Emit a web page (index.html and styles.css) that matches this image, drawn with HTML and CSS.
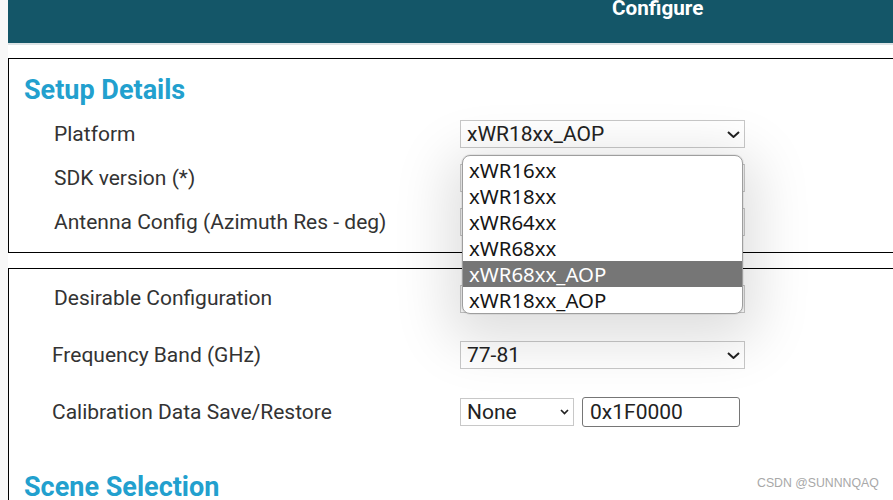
FILE: index.html
```html
<!DOCTYPE html>
<html lang="en">
<head>
<meta charset="utf-8">
<title>Configure</title>
<link rel="stylesheet" href="styles.css">
</head>
<body>
<div class="page">
  <header class="topbar"><span class="topbar-title">Configure</span></header>

  <section class="panel panel--setup">
    <h2 class="panel-title">Setup Details</h2>
    <div class="rows rows--setup">
      <div class="row">
        <span class="label">Platform</span>
        <div class="field">
          <div class="select select--wide">
            <span class="select-text">xWR18xx_AOP</span>
            <svg class="chev chev--big" viewBox="0 0 13 7" aria-hidden="true"><path d="M1 1l5.5 5 5.5-5" fill="none" stroke="#222" stroke-width="2"/></svg>
          </div>
          <ul class="dropdown">
            <li class="dropdown-item">xWR16xx</li>
            <li class="dropdown-item">xWR18xx</li>
            <li class="dropdown-item">xWR64xx</li>
            <li class="dropdown-item">xWR68xx</li>
            <li class="dropdown-item dropdown-item--active">xWR68xx_AOP</li>
            <li class="dropdown-item">xWR18xx_AOP</li>
          </ul>
        </div>
      </div>
      <div class="row">
        <span class="label">SDK version (*)</span>
        <div class="field"><div class="select select--wide"></div></div>
      </div>
      <div class="row">
        <span class="label">Antenna Config (Azimuth Res - deg)</span>
        <div class="field"><div class="select select--wide"></div></div>
      </div>
    </div>
  </section>

  <section class="panel panel--config">
    <div class="rows rows--config">
      <div class="row">
        <span class="label label--raised">Desirable Configuration</span>
        <div class="field"><div class="select select--wide"></div></div>
      </div>
      <div class="row row--tight">
        <span class="label">Frequency Band (GHz)</span>
        <div class="field">
          <div class="select select--wide">
            <span class="select-text">77-81</span>
            <svg class="chev chev--big" viewBox="0 0 13 7" aria-hidden="true"><path d="M1 1l5.5 5 5.5-5" fill="none" stroke="#222" stroke-width="2"/></svg>
          </div>
        </div>
      </div>
      <div class="row row--tight">
        <span class="label">Calibration Data Save/Restore</span>
        <div class="field field--pair">
          <div class="select select--small">
            <span class="select-text">None</span>
            <svg class="chev chev--small" viewBox="0 0 9 6" aria-hidden="true"><path d="M1 1l3.5 3.5 3.5-3.5" fill="none" stroke="#222" stroke-width="1.7"/></svg>
          </div>
          <div class="text-input">0x1F0000</div>
        </div>
      </div>
    </div>
    <h2 class="panel-title panel-title--scene">Scene Selection</h2>
  </section>
</div>
<div class="watermark">CSDN @SUNNNQAQ</div>
</body>
</html>
```

FILE: styles.css
```css
html, body {
  margin: 0;
  padding: 0;
  height: 100%;
  overflow: hidden;
}

body {
  background: #f8f8f8;
  font-family: Roboto, "Liberation Sans", sans-serif;
  position: relative;
}

.page {
  margin-left: 8px;
  width: 900px;
  min-height: 100%;
  background: #ffffff;
}

.topbar {
  height: 43px;
  background: #145668;
  box-shadow: 0 2px 0 #dde3e5;
  padding-left: 604px;
  box-sizing: border-box;
}

.topbar-title {
  display: block;
  color: #ffffff;
  font-weight: 700;
  font-size: 20.7px;
  line-height: 16px;
}

.panel {
  border: 1px solid #000;
  border-right: none;
  margin-top: 15px;
  padding: 16px 0 16px 15px;
}

.panel-title {
  margin: 0;
  font-size: 27px;
  line-height: 30px;
  font-weight: 700;
  color: #22a0ce;
}

.panel-title--scene {
  margin-top: 45px;
}

.rows {
  display: flex;
  flex-direction: column;
}

.rows--setup {
  margin-top: 15px;
  gap: 16px;
}

.rows--config {
  gap: 28px;
}

.row {
  display: flex;
  align-items: center;
  min-height: 28px;
  padding-left: 30px;
}

.row--tight {
  padding-left: 28px;
}

.label {
  flex: 0 0 406px;
  font-size: 21px;
  line-height: 26px;
  color: #333333;
}

.label--raised {
  margin-bottom: 2px;
}

.row--tight .label {
  flex-basis: 408px;
}

.field {
  position: relative;
  display: flex;
  align-items: center;
}

.field--pair {
  gap: 8px;
}

.select {
  height: 28px;
  box-sizing: border-box;
  border: 1px solid #c8c8c8;
  background: #ffffff;
  display: flex;
  align-items: center;
  justify-content: space-between;
  padding: 0 4px 0 6px;
  font-size: 21px;
  color: #222222;
}

.select--wide {
  width: 285px;
}

.select--small {
  width: 114px;
}

.select-text {
  line-height: 26px;
}

.chev--big {
  width: 13px;
  height: 7px;
  margin-left: auto;
}

.chev--small {
  width: 9px;
  height: 6px;
  margin-left: auto;
}

.text-input {
  width: 158px;
  height: 30px;
  box-sizing: border-box;
  border: 1px solid #767676;
  border-radius: 3px;
  padding-left: 7px;
  font-size: 21px;
  line-height: 28px;
  color: #222222;
}

.dropdown {
  position: absolute;
  top: 35px;
  left: 2px;
  width: 281px;
  box-sizing: border-box;
  margin: 0;
  padding: 1px 0 0;
  list-style: none;
  background: #ffffff;
  border: 1px solid #9e9e9e;
  border-radius: 8px;
  overflow: hidden;
  box-shadow: 0 0 0 1px rgba(0, 0, 0, 0.06), 0 14px 55px 14px rgba(0, 0, 0, 0.13);
  z-index: 5;
}

.dropdown-item {
  height: 26px;
  line-height: 26px;
  padding-left: 6px;
  font-family: "Noto Sans", "Open Sans", sans-serif;
  font-size: 20.4px;
  color: #151515;
}

.dropdown-item--active {
  background: #767676;
  color: #ffffff;
}

.watermark {
  position: absolute;
  left: 757px;
  top: 476px;
  font-family: "Liberation Sans", Arial, sans-serif;
  font-size: 12.3px;
  color: #a8a8a8;
}
```
